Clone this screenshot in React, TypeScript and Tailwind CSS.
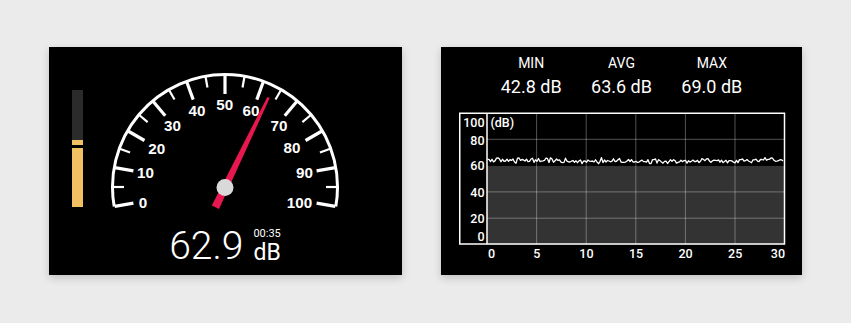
import React from 'react'

const CX = 225
const CY = 187

function polar(r: number, deg: number): [number, number] {
  const a = (deg * Math.PI) / 180
  return [CX + r * Math.cos(a), CY - r * Math.sin(a)]
}

// value 0..100 mapped on a 200° sweep
const angleOf = (v: number) => 190 - 2 * v

const GAUGE_LABELS: [number, number, number][] = [
  [0, 143, 203],
  [10, 145.5, 172.5],
  [20, 156.7, 148.3],
  [30, 172.5, 126],
  [40, 197, 111],
  [50, 224.7, 105],
  [60, 251, 111],
  [70, 279, 126],
  [80, 292, 148],
  [90, 304.5, 173],
  [100, 299.5, 202.5],
]

function Gauge({ value }: { value: number }) {
  const ticks = []
  for (let v = 0; v <= 100; v += 5) {
    const major = v % 10 === 0
    const [x1, y1] = polar(112, angleOf(v))
    const [x2, y2] = polar(major ? 93 : 101, angleOf(v))
    ticks.push(
      <line key={v} x1={x1} y1={y1} x2={x2} y2={y2} stroke="#fff" strokeWidth={major ? 3.2 : 2.2} />
    )
  }

  const [ax, ay] = polar(112.5, 190)
  const [bx, by] = polar(112.5, -10)

  const a = (angleOf(value) * Math.PI) / 180
  const ux = Math.cos(a)
  const uy = -Math.sin(a)
  const nx = -uy
  const ny = ux
  const pt = (d: number, w: number) => `${CX + ux * d + nx * w},${CY + 0.5 + uy * d + ny * w}`
  const needle = [pt(-22, 4), pt(100, 1.3), pt(100, -1.3), pt(-22, -4)].join(' ')

  return (
    <svg width={240} height={146} viewBox="105 67 240 146" className="block">
      <path
        d={`M ${ax} ${ay} A 112.5 112.5 0 1 1 ${bx} ${by}`}
        fill="none"
        stroke="#fff"
        strokeWidth={3}
      />
      {ticks}
      {GAUGE_LABELS.map(([v, x, y]) => (
        <text
          key={v}
          x={x}
          y={y + 5.4}
          textAnchor="middle"
          fill="#fff"
          fontSize={15.2}
          fontWeight={700}
          fontFamily="'Liberation Sans', Arial, sans-serif"
        >
          {v}
        </text>
      ))}
      <polygon points={needle} fill="#e8174f" />
      <circle cx={CX} cy={CY + 0.5} r={8.5} fill="#d9d9d9" />
    </svg>
  )
}

function LevelBar() {
  return (
    <div className="flex flex-col w-[11px] h-[117px]">
      <div className="h-[50px] bg-[#2b2b2b]" />
      <div className="h-[5px] bg-[#f0c062]" />
      <div className="h-[3px] bg-black" />
      <div className="flex-1 bg-[#f0c062]" />
    </div>
  )
}

// seeded noise so the trace is stable between renders
function makeTrace() {
  let s = 1234567
  const rnd = () => {
    s = (s * 1103515245 + 12345) % 2147483648
    return s / 2147483648
  }
  const pts: string[] = []
  for (let x = 488.5; x <= 785; x += 1.5) {
    let v = 63.4 + (rnd() - 0.5) * 3 + (rnd() - 0.5) * 1.2
    if (rnd() > 0.92) v += 1.5
    if (x < 570 && rnd() > 0.55) v += 0.9
    const y = 244.5 - v * 1.315
    pts.push(`${x.toFixed(1)},${y.toFixed(1)}`)
  }
  return pts.join(' ')
}

const TRACE = makeTrace()

const Y_LABELS: [string, number][] = [
  ['100', 122.5],
  ['80', 141],
  ['60', 166],
  ['40', 192.5],
  ['20', 219],
  ['0', 237],
]

const X_LABELS: [string, number, 'start' | 'middle' | 'end'][] = [
  ['0', 489, 'start'],
  ['5', 537.8, 'middle'],
  ['10', 587.4, 'middle'],
  ['15', 637, 'middle'],
  ['20', 686.6, 'middle'],
  ['25', 736.2, 'middle'],
  ['30', 786, 'end'],
]

function HistoryChart() {
  const font = "Roboto, 'Liberation Sans', sans-serif"
  return (
    <svg width={330} height={152} viewBox="458 111 330 152" className="block">
      <rect x={488} y={166} width={297.5} height={78.5} fill="#333" />
      {[1, 2, 3, 4, 5].map((k) => (
        <line
          key={k}
          x1={488 + k * 49.6}
          x2={488 + k * 49.6}
          y1={113}
          y2={244}
          stroke="rgba(255,255,255,0.32)"
          strokeWidth={1}
        />
      ))}
      {[20, 40, 80].map((v) => (
        <line
          key={v}
          x1={488}
          x2={785}
          y1={244.5 - v * 1.315}
          y2={244.5 - v * 1.315}
          stroke="rgba(255,255,255,0.32)"
          strokeWidth={1}
        />
      ))}
      <polyline points={TRACE} fill="none" stroke="#fff" strokeWidth={1.3} strokeLinejoin="round" />
      <rect x={460.75} y={113.25} width={324.75} height={130.75} fill="none" stroke="#fff" strokeWidth={1.5} />
      <line x1={488} x2={488} y1={113} y2={244} stroke="#fff" strokeWidth={1.5} />
      {Y_LABELS.map(([t, y]) => (
        <text key={t} x={485.5} y={y + 4.4} textAnchor="end" fill="#fff" fontSize={12.5} fontWeight={500} fontFamily={font}>
          {t}
        </text>
      ))}
      <text x={491.5} y={126.9} fill="#fff" fontSize={12.5} fontWeight={500} fontFamily={font}>
        (dB)
      </text>
      {X_LABELS.map(([t, x, anchor]) => (
        <text key={t} x={x} y={257.5} textAnchor={anchor} fill="#fff" fontSize={12.5} fontWeight={500} fontFamily={font}>
          {t}
        </text>
      ))}
    </svg>
  )
}

const STATS = [
  { label: 'MIN', value: '42.8' },
  { label: 'AVG', value: '63.6' },
  { label: 'MAX', value: '69.0' },
]

export default function App() {
  return (
    <div className="w-[851px] h-[323px] bg-[#ebebeb] flex items-start gap-[39px] pl-[49px] pt-[47px] font-['Roboto',sans-serif]">
      {/* Meter */}
      <div className="flex items-start w-[353px] h-[228px] bg-black shadow-[0_3px_8px_rgba(0,0,0,0.18)]">
        <div className="ml-[23px] mt-[43px]">
          <LevelBar />
        </div>
        <div className="ml-[22px] mt-[20px] flex flex-col w-[240px]">
          <Gauge value={62.9} />
          <div className="mt-[14px] flex justify-center text-white">
            <span className="text-[39px] leading-[39px] font-light">62.9</span>
            <div className="ml-[10px] flex flex-col">
              <span className="mt-[0.5px] text-[11px] leading-[11px]">00:35</span>
              <span className="mt-[2px] text-[23px] leading-[23px]">dB</span>
            </div>
          </div>
        </div>
      </div>

      {/* History */}
      <div className="flex flex-col w-[361px] h-[228px] bg-black shadow-[0_3px_8px_rgba(0,0,0,0.18)]">
        <div className="mt-[9px] grid grid-cols-3 w-[271px] mx-auto text-white text-center">
          {STATS.map((s) => (
            <div key={s.label} className="flex flex-col items-center">
              <span className="text-[14px] leading-[14px]">{s.label}</span>
              <span className="mt-[7.5px] text-[18px] leading-[18px]">
                {s.value} dB
              </span>
            </div>
          ))}
        </div>
        <div className="ml-[16px] mt-[15px]">
          <HistoryChart />
        </div>
      </div>
    </div>
  )
}
